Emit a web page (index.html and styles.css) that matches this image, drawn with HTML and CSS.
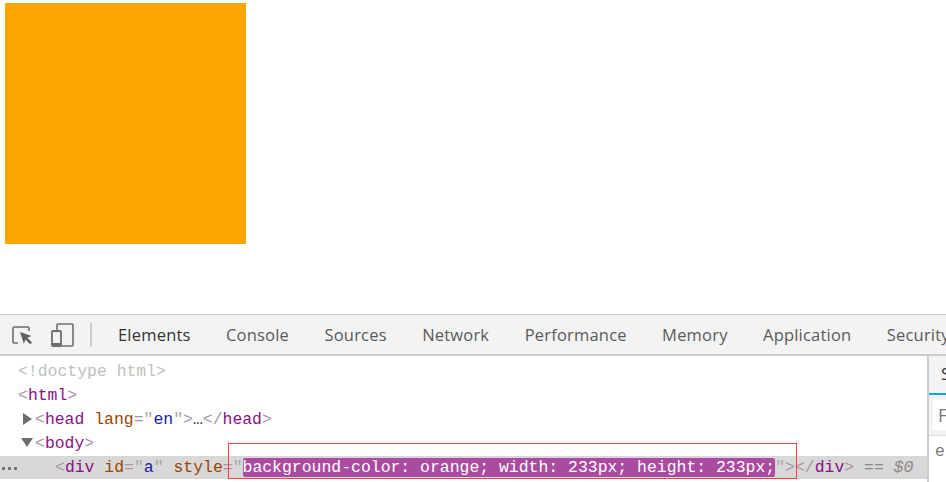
FILE: index.html
```html
<!DOCTYPE html>
<html lang="en">
<head>
<meta charset="utf-8">
<title>DevTools</title>
<link rel="stylesheet" href="styles.css">
</head>
<body>
<main class="page"><div class="box"></div></main>
<section class="devtools">
  <header class="toolbar">
    <div class="tools">
      <svg class="icon" width="24" height="24" viewBox="0 0 24 24" aria-hidden="true"><path d="M7 20H3a1 1 0 0 1-1-1V5a1 1 0 0 1 1-1h14a1 1 0 0 1 1 1v3" fill="none" stroke="#6e6e6e" stroke-width="1.6"/><path d="M9 9l11.500 4-4.200 1.700 4.700 4.700-1.800 1.800-4.700-4.700-1.600 4.200z" fill="#5f5f5f"/></svg>
      <svg class="icon" width="24" height="26" viewBox="0 0 24 26" aria-hidden="true"><path d="M7 8V3a1 1 0 0 1 1-1h14a1 1 0 0 1 1 1v20a1 1 0 0 1-1 1H11" fill="none" stroke="#6e6e6e" stroke-width="1.600"/><rect x="2" y="9" width="9" height="15" rx="1" fill="none" stroke="#6e6e6e" stroke-width="1.800"/><rect x="2" y="21" width="9" height="3" fill="#6e6e6e"/></svg>
      <span class="sep"></span>
    </div>
    <nav class="tabs">
      <span class="tab active">Elements</span>
      <span class="tab">Console</span>
      <span class="tab">Sources</span>
      <span class="tab">Network</span>
      <span class="tab">Performance</span>
      <span class="tab">Memory</span>
      <span class="tab">Application</span>
      <span class="tab">Security</span>
    </nav>
  </header>
  <div class="panes">
    <div class="dom">
      <div class="row doctype">&lt;!doctype html&gt;</div>
      <div class="row"><span class="br">&lt;</span><span class="tg">html</span><span class="br">&gt;</span></div>
      <div class="row nest"><span class="tri right"></span><span class="br">&lt;</span><span class="tg">head</span> <span class="an">lang</span><span class="br">=</span><span class="q">"</span><span class="av">en</span><span class="q">"</span><span class="br">&gt;</span><span class="dots">…</span><span class="br">&lt;/</span><span class="tg">head</span><span class="br">&gt;</span></div>
      <div class="row nest"><span class="tri down"></span><span class="br">&lt;</span><span class="tg">body</span><span class="br">&gt;</span></div>
      <div class="row selected"><span class="more"><i></i><i></i><i></i></span><span class="code"><span class="br">&lt;</span><span class="tg">div</span> <span class="an">id</span><span class="br">=</span><span class="q">"</span><span class="av">a</span><span class="q">"</span> <span class="an">style</span><span class="br">=</span><span class="q">"</span><span class="hl">background-color: orange; width: 233px; height: 233px;</span><span class="q">"</span><span class="br">&gt;&lt;/</span><span class="tg">div</span><span class="br">&gt;</span> <span class="eq">== $0</span></span><span class="redbox"></span></div>
    </div>
    <aside class="side">
      <div class="sidetabs"><span class="sidetab">S</span></div>
      <div class="filter"><span class="input">F</span></div>
      <div class="rule">e</div>
    </aside>
  </div>
</section>
</body>
</html>
```
FILE: styles.css
```css
* { box-sizing: border-box; }
html, body { margin: 0; height: 100%; overflow: hidden; background: #fff; }
body { display: flex; flex-direction: column; width: 946px; height: 482px; }
.page { height: 314px; padding: 3px 0 0 5px; flex: none; }
.box { width: 241px; height: 241px; background: #ffa500; }
.devtools { flex: 1; display: flex; flex-direction: column; min-height: 0; border-top: 1px solid #ccc; }
.toolbar { height: 41px; flex: none; display: flex; background: #f3f3f3; border-bottom: 2px solid #ccc; overflow: hidden; }
.tools { display: flex; align-items: center; width: 101px; flex: none; padding-left: 11px; }
.icon { flex: none; }
.icon + .icon { margin-left: 15px; }
.sep { width: 2px; height: 24px; margin-left: 16px; background: #ccc; }
.tabs { display: flex; }
.tab { flex: none; height: 41px; padding: 0 18.4px 0 17px; font: 16.5px/40px "Open Sans", sans-serif; letter-spacing: 0.2px; color: #5a5a5a; white-space: nowrap; }
.tab.active { color: #333; border-bottom: 2px solid #03a9f4; }
.panes { flex: 1; display: flex; min-height: 0; }
.dom { flex: 1; min-width: 0; font: 16.45px/24px "Liberation Mono", monospace; color: #a894a6; padding-top: 4px; }
.row { height: 24px; padding-left: 18px; white-space: pre; position: relative; }
.doctype { color: #c0c0c0; }
.nest { padding-left: 35px; }
.tg { color: #881280; }
.an { color: #994500; }
.av { color: #1a1aa6; }
.q { color: #a8a8a8; }
.br { color: #a894a6; }
.dots { color: #333; }
.tri { position: absolute; left: 23px; top: 5px; width: 0; height: 0; border-style: solid; border-color: transparent; }
.tri.right { border-width: 6px 0 6px 9px; border-left-color: #6e6e6e; }
.tri.down { border-width: 9px 6px 0 6px; border-top-color: #6e6e6e; left: 21px; top: 6px; }
.row.selected { background: #d8d8d8; height: 23px; line-height: 23px; padding-left: 55px; }
.more { position: absolute; left: 2px; top: 11px; display: flex; gap: 3px; }
.more i { width: 3px; height: 3px; border-radius: 1px; background: #6a6a6a; }
.hl { background: #ab4aa1; color: #fff; border-radius: 2px; }
.eq { color: #8a8a8a; font-style: italic; }
.redbox { position: absolute; left: 228px; top: -13px; width: 569px; height: 36px; border: 1px solid #f04040; pointer-events: none; }
.side { width: 19px; flex: none; border-left: 2px solid #ccc; overflow: hidden; background: #fff; display: flex; flex-direction: column; }
.sidetabs { height: 39px; border-bottom: 2px solid #03a9f4; background: #f3f3f3; font: 17px/36px "Open Sans", sans-serif; color: #333; padding-left: 12px; }
.filter { height: 41px; padding: 5px 0 5px 4px; background: #f3f3f3; border-bottom: 1px solid #ddd; }
.input { display: block; height: 30px; background: #fff; font: 18px/30px "Open Sans", sans-serif; color: #777; padding-left: 5px; }
.rule { font: 16.45px/24px "Liberation Mono", monospace; color: #777; padding: 4px 0 0 6px; }
```
